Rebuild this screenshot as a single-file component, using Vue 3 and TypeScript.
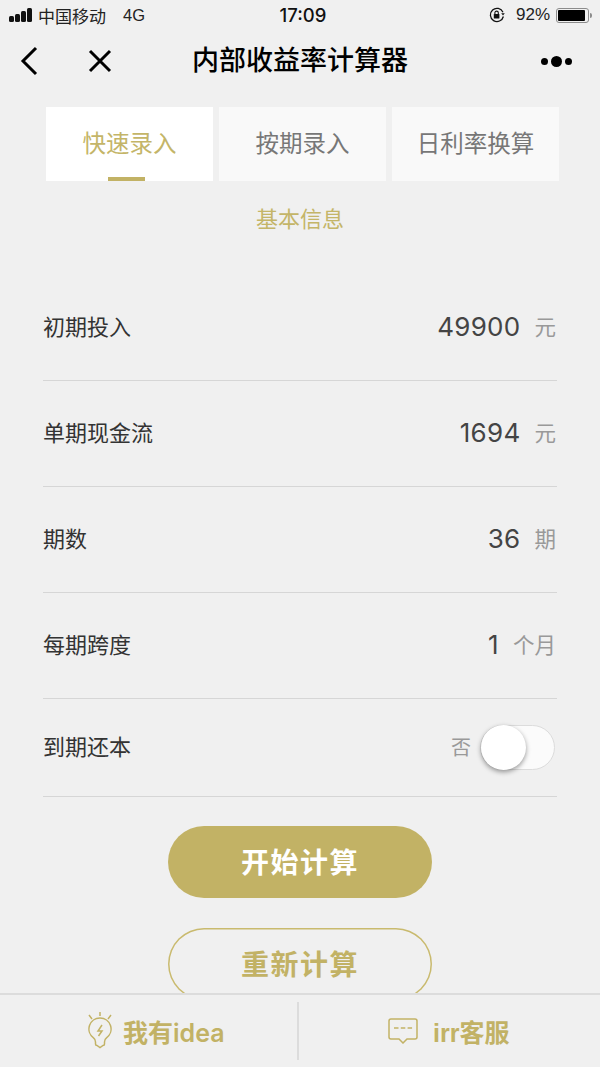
<script setup lang="ts">
import { ref } from 'vue'

interface FieldRow {
  label: string
  value: string
  unit: string
}

const tabs = ['快速录入', '按期录入', '日利率换算']
const active_tab = ref(0)

const rows: FieldRow[] = [
  { label: '初期投入', value: '49900', unit: '元' },
  { label: '单期现金流', value: '1694', unit: '元' },
  { label: '期数', value: '36', unit: '期' },
  { label: '每期跨度', value: '1', unit: '个月' }
]
</script>

<template>
  <div class="page">
    <div class="status-bar">
      <div class="status-left">
        <span class="signal"><i></i><i></i><i></i><i></i></span>
        <span class="carrier">中国移动</span>
        <span class="net">4G</span>
      </div>
      <div class="status-time">17:09</div>
      <div class="status-right">
        <svg class="lock" width="18" height="18" viewBox="0 0 18 18" fill="none">
          <path d="M15 6.2A6.6 6.6 0 1 0 15.4 10.5" stroke="#111" stroke-width="1.3" />
          <path d="M13.2 7.2h3.6L15 9.6z" fill="#111" />
          <rect x="5.8" y="8" width="5.6" height="4.6" rx="0.6" fill="#111" />
          <path d="M6.9 8V6.8a1.7 1.7 0 0 1 3.4 0V8" stroke="#111" stroke-width="1.1" />
        </svg>
        <span class="percent">92%</span>
        <span class="battery"><b></b></span>
        <span class="battery-tip"></span>
      </div>
    </div>

    <div class="nav-bar">
      <svg class="nav-back" width="20" height="30" viewBox="0 0 20 30" fill="none">
        <path d="M17 2 4 15l13 13" stroke="#000" stroke-width="3" />
      </svg>
      <svg class="nav-close" width="24" height="24" viewBox="0 0 24 24" fill="none">
        <path d="M2 2l20 20M22 2 2 22" stroke="#000" stroke-width="3" />
      </svg>
      <div class="nav-title">内部收益率计算器</div>
      <div class="nav-more"><i></i><i class="big"></i><i></i></div>
    </div>

    <div class="tabs">
      <div
        v-for="(tab, index) in tabs"
        :key="tab"
        class="tab"
        :class="{ active: active_tab === index }"
        @click="active_tab = index"
      >
        {{ tab }}
      </div>
    </div>

    <div class="section-title">基本信息</div>

    <div class="form">
      <div v-for="row in rows" :key="row.label" class="row">
        <span class="row-label">{{ row.label }}</span>
        <span class="row-value">{{ row.value }}</span>
        <span class="row-unit">{{ row.unit }}</span>
      </div>
      <div class="row row-switch">
        <span class="row-label">到期还本</span>
        <span class="switch-text">否</span>
        <span class="switch"><span class="switch-knob"></span></span>
      </div>
    </div>

    <div class="actions">
      <div class="btn btn-primary">开始计算</div>
      <div class="btn btn-ghost">重新计算</div>
    </div>

    <div class="footer">
      <div class="footer-item footer-idea">
        <svg width="24" height="38" viewBox="0 0 24 38" fill="none" stroke="#c2b265" stroke-width="1.5">
          <path d="M12 0v4M1 3l3 4M23 3l-3 4" />
          <path d="M12 6a11 11 0 0 0-6.500 19.900c1.500 1.100 2 2.500 2 4.100v2c0 1 .5 1.500 1.500 1.500l3 2 3-2c1 0 1.500-.5 1.500-1.500v-2c0-1.600.5-3 2-4.100A11 11 0 0 0 12 6z" />
          <path d="M14 13l-4 6h4l-3.500 5" />
        </svg>
        <span>我有<em>idea</em></span>
      </div>
      <div class="footer-divider"></div>
      <div class="footer-item footer-service">
        <svg width="30" height="26" viewBox="0 0 30 26" fill="none" stroke="#c2b265" stroke-width="1.5">
          <path d="M3 1h24a2 2 0 0 1 2 2v16a2 2 0 0 1-2 2h-8l-4 4-4-4H3a2 2 0 0 1-2-2V3a2 2 0 0 1 2-2z" />
          <path d="M6 10h4.500M12.800 10h4.500M19.600 10h4.500" />
        </svg>
        <span>irr客服</span>
      </div>
    </div>
  </div>
</template>

<style scoped>
.page {
  position: relative;
  width: 600px;
  height: 1067px;
  overflow: hidden;
  background: #f0f0f0;
  font-family: "Liberation Sans", "Noto Sans CJK SC", sans-serif;
  color: #333;
}

.status-bar {
  height: 30px;
  display: grid;
  grid-template-columns: 1fr auto 1fr;
  align-items: center;
  color: #111;
}

.status-left {
  display: flex;
  align-items: center;
  padding-left: 9px;
}

.signal {
  display: flex;
  align-items: flex-end;
  gap: 1px;
  width: 24px;
}

.signal i {
  display: block;
  width: 5px;
  background: #111;
  border-radius: 1.5px;
}

.signal i:nth-child(1) { height: 6px; }
.signal i:nth-child(2) { height: 8px; }
.signal i:nth-child(3) { height: 11px; }
.signal i:nth-child(4) { height: 14px; }

.carrier {
  margin-left: 5px;
  font-size: 17px;
  color: #222;
}

.net {
  margin-left: 17px;
  font-size: 16.5px;
  color: #222;
}

.status-time {
  margin-left: 6px;
  font-family: "Inter", "Liberation Sans", sans-serif;
  font-size: 18.5px;
  font-weight: 500;
}

.status-right {
  display: flex;
  align-items: center;
  justify-content: flex-end;
  padding-right: 8px;
}

.lock {
  margin-right: 10px;
}

.percent {
  font-size: 17px;
  margin-right: 6px;
  color: #222;
}

.battery {
  display: block;
  width: 33px;
  height: 15px;
  box-sizing: border-box;
  border: 1px solid #8c8c8c;
  border-radius: 3px;
  padding: 1px;
}

.battery b {
  display: block;
  width: 92%;
  height: 100%;
  background: #000;
  border-radius: 1px;
}

.battery-tip {
  display: block;
  width: 2px;
  height: 5px;
  margin-left: 1px;
  background: #8c8c8c;
  border-radius: 0 2px 2px 0;
}

.nav-bar {
  height: 62px;
  display: flex;
  align-items: center;
  padding-left: 19px;
}

.nav-back {
  flex: none;
}

.nav-close {
  flex: none;
  margin-left: 49px;
}

.nav-title {
  flex: none;
  margin-left: 80px;
  width: 216px;
  font-size: 27px;
  line-height: 36px;
  font-weight: 500;
  text-align: center;
  color: #000;
}

.nav-more {
  flex: none;
  margin-left: 133px;
  display: flex;
  align-items: center;
  gap: 3px;
}

.nav-more i {
  display: block;
  width: 7px;
  height: 7px;
  border-radius: 50%;
  background: #000;
}

.nav-more i.big {
  width: 11px;
  height: 11px;
}

.tabs {
  margin: 15px 41px 0 46px;
  display: grid;
  grid-template-columns: repeat(3, 167px);
  gap: 6px;
}

.tab {
  position: relative;
  height: 74px;
  line-height: 74px;
  text-align: center;
  font-size: 23.5px;
  background: #f9f9f9;
  color: #777;
}

.tab.active {
  background: #fff;
  color: #c4b568;
}

.tab.active::after {
  content: "";
  position: absolute;
  left: 62px;
  bottom: 0;
  width: 37px;
  height: 4px;
  background: #c2b265;
}

.section-title {
  margin-top: 24px;
  text-align: center;
  font-size: 22px;
  line-height: 30px;
  color: #c4b568;
}

.form {
  margin: 40px 43px 0;
}

.row {
  height: 106px;
  box-sizing: border-box;
  border-bottom: 1px solid #d6d6d6;
  display: flex;
  align-items: center;
}

.row-switch {
  height: 98px;
}

.row-label {
  flex: 1;
  margin-bottom: 6px;
  font-size: 22px;
  color: #333;
}

.row-value {
  margin-bottom: 2px;
  font-family: "Inter", "Liberation Sans", sans-serif;
  font-size: 26px;
  letter-spacing: 0.3px;
  color: #444;
}

.row-unit {
  margin: 0 1px 4px 14px;
  font-size: 21.5px;
  color: #999;
}

.switch-text {
  margin: 0 9px 2px 0;
  font-size: 20px;
  color: #999;
}

.switch {
  position: relative;
  display: block;
  width: 75px;
  height: 45px;
  box-sizing: border-box;
  margin-right: 2px;
  border: 1px solid #dcdcdc;
  border-radius: 23px;
  background: #fbfbfb;
}

.switch-knob {
  position: absolute;
  left: 0;
  top: -1px;
  width: 45px;
  height: 45px;
  border-radius: 50%;
  background: #fff;
  box-shadow: 0 2px 5px rgba(0, 0, 0, 0.4);
}

.actions {
  margin-top: 29px;
  display: flex;
  flex-direction: column;
  align-items: center;
  gap: 30px;
}

.btn {
  width: 264px;
  height: 72px;
  box-sizing: border-box;
  border-radius: 36px;
  text-align: center;
  font-size: 28px;
  font-weight: 700;
  line-height: 76px;
  letter-spacing: 1.5px;
}

.btn-primary {
  background: #c2b265;
  color: #fff;
}

.btn-ghost {
  box-shadow: inset 0 0 0 1.5px #c9ba6e;
  color: #c2b265;
}

.footer {
  position: absolute;
  left: 0;
  right: 0;
  bottom: 0;
  height: 74px;
  box-sizing: border-box;
  border-top: 2px solid #dcdcdc;
  background: #f0f0f0;
  display: flex;
  align-items: center;
}

.footer-item {
  display: flex;
  align-items: center;
  font-size: 25px;
  font-weight: 700;
  color: #c2b265;
}

.footer-idea {
  width: 297px;
  box-sizing: border-box;
  padding-left: 88px;
  gap: 11px;
}

.footer-idea em {
  font-family: "Inter", "Liberation Sans", sans-serif;
  font-style: normal;
  font-weight: 600;
}

.footer-service {
  flex: 1;
  padding-left: 89px;
  gap: 15px;
}

.footer-divider {
  flex: none;
  width: 2px;
  height: 58px;
  background: #dcdcdc;
}
</style>
